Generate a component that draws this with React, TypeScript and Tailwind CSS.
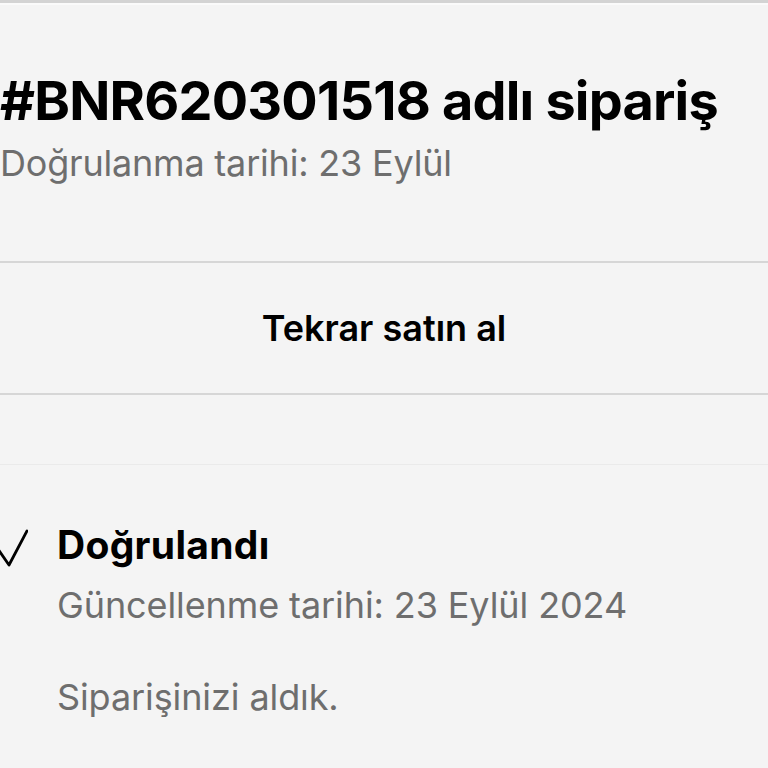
export default function App() {
  return (
    <div className="w-[768px] h-[768px] overflow-hidden bg-[#f4f4f4] font-['Inter',sans-serif] text-black">
      {/* top edge */}
      <div className="h-[3px] bg-[#d3d3d3]" />
      <div className="h-[2px] bg-[#fafafa]" />

      {/* order header */}
      <div className="h-[256px] pt-[64px]">
        <h1 className="text-[54px] leading-[64px] font-bold tracking-[-0.8px] whitespace-nowrap">
          #BNR620301518 adlı sipariş
        </h1>
        <p className="mt-[8px] text-[36px] leading-[44px] text-[#6e6e6e] tracking-[-0.2px] whitespace-nowrap">
          Doğrulanma tarihi: 23 Eylül
        </p>
      </div>

      {/* buy again */}
      <div className="border-y-2 border-[#d6d6d6]">
        <button className="w-full h-[130px] flex items-center justify-center text-[36px] font-semibold">
          Tekrar satın al
        </button>
      </div>

      <div className="h-[70px] border-b border-[#eaeaea]" />

      {/* status timeline */}
      <div className="flex pt-[58px]">
        <div className="w-[57px] pt-[6px]">
          <svg width="30" height="38" viewBox="0 0 30 38" fill="none" className="-ml-[2px]">
            <path d="M0 20 L11 36 L29 2" stroke="black" strokeWidth="2.8" strokeLinecap="round" strokeLinejoin="round" />
          </svg>
        </div>
        <div className="flex flex-col">
          <span className="text-[39px] leading-[44px] font-bold tracking-[0.3px]">Doğrulandı</span>
          <span className="mt-[16px] text-[36px] leading-[44px] text-[#6e6e6e] tracking-[-0.1px] whitespace-nowrap">
            Güncellenme tarihi: 23 Eylül 2024
          </span>
          <span className="mt-[48px] text-[36px] leading-[44px] text-[#6e6e6e] tracking-[-0.1px]">
            Siparişinizi aldık.
          </span>
        </div>
      </div>
    </div>
  );
}
